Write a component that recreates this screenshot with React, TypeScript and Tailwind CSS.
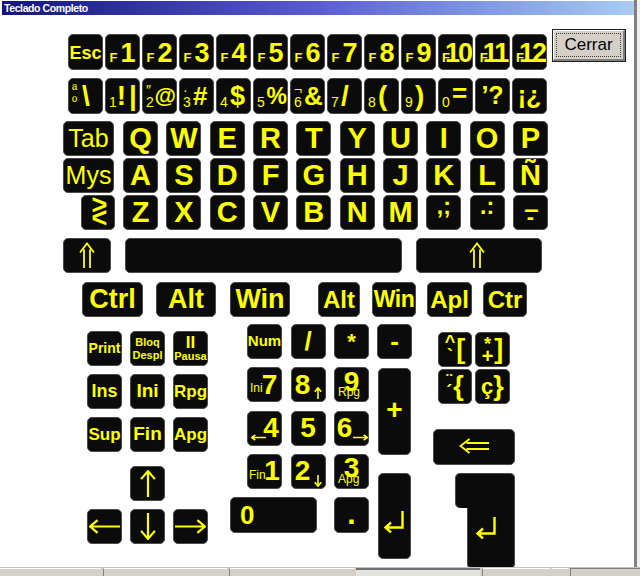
import React from "react";
import { twMerge } from "tailwind-merge";

const Y = "#ffff00";

function Key({ className, children }: { className?: string; children?: React.ReactNode }) {
  return (
    <div
      className={twMerge(
        "relative shrink-0 flex items-center justify-center overflow-hidden rounded-[5px] border border-[#4b4b4b] bg-[#0b0b0b] text-[#ffff00] font-bold leading-none whitespace-nowrap",
        className
      )}
    >
      {children}
    </div>
  );
}

// simple line arrow drawn in svg
function Arrow({ dir, w, h, sw = 2.2 }: { dir: "up" | "down" | "left" | "right"; w: number; h: number; sw?: number }) {
  let d = "";
  const s = sw / 2;
  if (dir === "up" || dir === "down") {
    const cx = w / 2;
    const hl = w / 2;
    if (dir === "up") d = `M${cx} ${s}V${h} M${s} ${hl + s}L${cx} ${s}L${w - s} ${hl + s}`;
    else d = `M${cx} 0V${h - s} M${s} ${h - hl - s}L${cx} ${h - s}L${w - s} ${h - hl - s}`;
  } else {
    const cy = h / 2;
    const hl = h / 2;
    if (dir === "left") d = `M${s} ${cy}H${w} M${hl + s} ${s}L${s} ${cy}L${hl + s} ${h - s}`;
    else d = `M0 ${cy}H${w - s} M${w - hl - s} ${s}L${w - s} ${cy}L${w - hl - s} ${h - s}`;
  }
  return (
    <svg width={w} height={h} viewBox={`0 0 ${w} ${h}`} fill="none" stroke={Y} strokeWidth={sw}>
      <path d={d} />
    </svg>
  );
}

function DoubleUp() {
  return (
    <svg width="16" height="26" viewBox="0 0 16 26" fill="none" stroke={Y} strokeWidth="1.8">
      <path d="M5 7.5V26M11 7.5V26M1 10.5L8 1.5L15 10.5" />
    </svg>
  );
}

function DoubleLeft() {
  return (
    <svg width="30" height="16" viewBox="0 0 30 16" fill="none" stroke={Y} strokeWidth="1.8">
      <path d="M7.5 5H30M7.5 11H30M10.5 1L1.5 8L10.5 15" />
    </svg>
  );
}

function EnterGlyph() {
  return (
    <svg width="22" height="22" viewBox="0 0 22 22" fill="none" stroke={Y} strokeWidth="2.4">
      <path d="M19.5 0V16.5H3M8 11.5L2.5 16.5L8 21.5" />
    </svg>
  );
}

function FKey({ n }: { n: number }) {
  const two = n >= 10;
  return (
    <Key className="w-[35px] h-[36px] items-end pb-[2px]">
      <div className="flex items-baseline">
        <span className={two ? "text-[13px] -mr-[5px]" : "text-[13px] mr-[3px]"}>F</span>
        <span className={two ? "text-[27px] tracking-[-2px] -mr-[2px]" : "text-[27px]"}>{n}</span>
      </div>
    </Key>
  );
}

const symRow = [
  { top: "ª", bottom: "º", big: "\\", cls: "text-[28px]" },
  { top: "", bottom: "1", big: "!|", cls: "text-[28px] tracking-[3px]" },
  { top: "″", bottom: "2", big: "@", cls: "text-[22px]" },
  { top: "·", bottom: "3", big: "#", cls: "text-[26px]" },
  { top: "", bottom: "4", big: "$", cls: "text-[27px]" },
  { top: "", bottom: "5", big: "%", cls: "text-[23px]" },
  { top: "¬", bottom: "6", big: "&", cls: "text-[26px]" },
  { top: "", bottom: "7", big: "/", cls: "text-[28px]" },
  { top: "", bottom: "8", big: "(", cls: "text-[28px]" },
  { top: "", bottom: "9", big: ")", cls: "text-[28px]" },
  { top: "", bottom: "0", big: "=", cls: "text-[26px] -mt-[6px]" },
];

function SymKey({ top, bottom, big, cls }: { top: string; bottom: string; big: string; cls: string }) {
  return (
    <Key className="w-[35px] h-[36px] justify-start pl-[3px]">
      <div className="flex w-[10px] flex-col justify-between self-stretch pt-[4px] pb-[4px] text-[14px] font-normal">
        <span className="h-[10px]">{top}</span>
        <span>{bottom}</span>
      </div>
      <span className={cls}>{big}</span>
    </Key>
  );
}

function Letter({ c }: { c: string }) {
  return <Key className="w-[35px] h-[35px] text-[29px]">{c}</Key>;
}

function CerrarButton() {
  return (
    <div className="ml-[5px] h-[33px] w-[74px] border border-[#202020] bg-[#d4d0c8]">
      <div className="h-full w-full border-l border-t border-white border-r-2 border-b-2 border-r-[#808080] border-b-[#808080] p-[2px]">
        <div className="flex h-full w-full items-center justify-center border border-dotted border-[#404040] text-[17px] text-black">
          Cerrar
        </div>
      </div>
    </div>
  );
}

export default function App() {
  return (
    <div className="flex h-[576px] w-[640px] flex-col overflow-hidden bg-white font-['Liberation_Sans',Arial,sans-serif]">
      <div className="flex h-[567px]">
        <div className="flex w-[634px] flex-col">
          {/* title bar */}
          <div className="ml-[2px] mt-px h-[14px] bg-gradient-to-r from-[#14147a] via-[#5c5cd2] via-50% to-[#a8ccf0] pl-[2px] text-[10.5px] font-bold leading-[14px] tracking-[-0.4px] text-white">
            Teclado Completo
          </div>

          {/* F row */}
          <div className="mt-[14px] flex items-start">
            <div className="ml-[68px] mt-[5px] flex gap-[2px]">
              <Key className="w-[35px] h-[36px] text-[18px] pt-[3px]">Esc</Key>
              {[1, 2, 3, 4, 5, 6, 7, 8, 9, 10, 11, 12].map((n) => (
                <FKey key={n} n={n} />
              ))}
            </div>
            <CerrarButton />
          </div>

          {/* number row */}
          <div className="ml-[68px] mt-[8px] flex gap-[2px]">
            {symRow.map((s, i) => (
              <SymKey key={i} {...s} />
            ))}
            <Key className="w-[35px] h-[36px] text-[25px]">’?</Key>
            <Key className="w-[35px] h-[36px] text-[25px]">¡¿</Key>
          </div>

          {/* qwerty */}
          <div className="ml-[63px] mt-[7px] flex">
            <Key className="w-[51px] h-[35px] text-[25px] font-normal">Tab</Key>
            <div className="ml-[9px] flex gap-[8.33px]">
              {"QWERTYUIOP".split("").map((c) => (
                <Letter key={c} c={c} />
              ))}
            </div>
          </div>

          <div className="ml-[63px] mt-[2px] flex">
            <Key className="w-[51px] h-[35px] text-[25px] font-normal">Mys</Key>
            <div className="ml-[9px] flex gap-[8.33px]">
              {"ASDFGHJKLÑ".split("").map((c) => (
                <Letter key={c} c={c} />
              ))}
            </div>
          </div>

          <div className="ml-[81px] mt-[2px] flex">
            <Key className="w-[34px] h-[35px] flex-col text-[27px] leading-[13px] pl-[3px] pb-[2px]">
              <span>&gt;</span>
              <span>&lt;</span>
            </Key>
            <div className="ml-[8px] flex gap-[8.33px]">
              {"ZXCVBNM".split("").map((c) => (
                <Letter key={c} c={c} />
              ))}
              <Key className="w-[35px] h-[35px] items-end pb-[6px] text-[23px]">,;</Key>
              <Key className="w-[35px] h-[35px] items-end pb-[6px] text-[23px]">.:</Key>
              <Key className="w-[35px] h-[35px] flex-col text-[26px] leading-[8px]">
                <span className="pl-[2px]">–</span>
                <span className="text-[22px]">-</span>
              </Key>
            </div>
          </div>

          {/* shift + space */}
          <div className="ml-[63px] mt-[8px] flex gap-[14px]">
            <Key className="w-[48px] h-[35px] pb-[2px]">
              <DoubleUp />
            </Key>
            <Key className="w-[277px] h-[35px]" />
            <Key className="w-[126px] h-[35px] pb-[2px] pr-[4px]">
              <DoubleUp />
            </Key>
          </div>

          {/* modifiers */}
          <div className="ml-[82px] mt-[9px] flex">
            <Key className="w-[61px] h-[35px] text-[27px]">Ctrl</Key>
            <Key className="ml-[13px] w-[60px] h-[35px] text-[27px]">Alt</Key>
            <Key className="ml-[14px] w-[60px] h-[35px] text-[27px]">Win</Key>
            <Key className="ml-[28px] w-[42px] h-[35px] text-[24px]">Alt</Key>
            <Key className="ml-[12px] w-[44px] h-[35px] text-[23px] tracking-[-0.5px]">Win</Key>
            <Key className="ml-[11px] w-[45px] h-[35px] text-[24px]">Apl</Key>
            <Key className="ml-[11px] w-[44px] h-[35px] text-[24px]">Ctr</Key>
          </div>

          {/* lower clusters */}
          <div className="mt-[7px] flex items-start">
            {/* edit / arrows */}
            <div className="ml-[87px] mt-[7px] flex flex-col">
              <div className="grid grid-cols-[35px_35px_35px] gap-[8px]">
                <Key className="w-[35px] h-[35px] text-[14px]">Print</Key>
                <Key className="w-[35px] h-[35px] flex-col text-[11px] leading-[13px]">
                  <span>Bloq</span>
                  <span>Despl</span>
                </Key>
                <Key className="w-[35px] h-[35px] flex-col">
                  <span className="text-[17px] leading-[15px]">II</span>
                  <span className="text-[11px] leading-[12px]">Pausa</span>
                </Key>
                <Key className="w-[35px] h-[35px] text-[18px]">Ins</Key>
                <Key className="w-[35px] h-[35px] text-[19px]">Ini</Key>
                <Key className="w-[35px] h-[35px] text-[17px]">Rpg</Key>
                <Key className="w-[35px] h-[35px] text-[17px]">Sup</Key>
                <Key className="w-[35px] h-[35px] text-[19px]">Fin</Key>
                <Key className="w-[35px] h-[35px] text-[17px]">Apg</Key>
              </div>
              <div className="ml-[43px] mt-[14px]">
                <Key className="w-[35px] h-[35px]">
                  <Arrow dir="up" w={16} h={27} />
                </Key>
              </div>
              <div className="mt-[8px] flex gap-[8px]">
                <Key className="w-[35px] h-[35px]">
                  <Arrow dir="left" w={31} h={15} />
                </Key>
                <Key className="w-[35px] h-[35px]">
                  <Arrow dir="down" w={16} h={27} />
                </Key>
                <Key className="w-[35px] h-[35px]">
                  <Arrow dir="right" w={31} h={15} />
                </Key>
              </div>
            </div>

            {/* numpad */}
            <div className="ml-[22px] flex">
              <div className="flex flex-col gap-[8.25px]">
                <div className="ml-[17px] flex gap-[8.5px]">
                  <Key className="w-[35px] h-[35px] text-[15px]">Num</Key>
                  <Key className="w-[35px] h-[35px] text-[26px]">/</Key>
                  <Key className="w-[35px] h-[35px] text-[22px]">*</Key>
                </div>
                <div className="ml-[17px] flex gap-[8.5px]">
                  <Key className="w-[35px] h-[35px] text-[28px] pl-[10px]">
                    7<span className="absolute bottom-[4px] left-[2px] text-[12px] font-normal">Ini</span>
                  </Key>
                  <Key className="w-[35px] h-[35px] text-[28px] pr-[11px]">
                    8
                    <span className="absolute bottom-[2px] right-[3px]">
                      <Arrow dir="up" w={8} h={12} sw={1.6} />
                    </span>
                  </Key>
                  <Key className="w-[35px] h-[35px] text-[28px] pb-[6px]">
                    9<span className="absolute bottom-0 left-[3px] text-[12px] font-normal">Rpg</span>
                  </Key>
                </div>
                <div className="ml-[17px] flex gap-[8.5px]">
                  <Key className="w-[35px] h-[35px] text-[28px] pl-[13px]">
                    4
                    <span className="absolute bottom-[4px] left-[3px]">
                      <Arrow dir="left" w={15} h={7} sw={1.6} />
                    </span>
                  </Key>
                  <Key className="w-[35px] h-[35px] text-[28px]">5</Key>
                  <Key className="w-[35px] h-[35px] text-[28px] pr-[14px]">
                    6
                    <span className="absolute bottom-[4px] right-0">
                      <Arrow dir="right" w={15} h={7} sw={1.6} />
                    </span>
                  </Key>
                </div>
                <div className="ml-[17px] flex gap-[8.5px]">
                  <Key className="w-[35px] h-[35px] text-[28px] pl-[15px]">
                    1<span className="absolute bottom-[4px] left-[1px] text-[12px] font-normal">Fin</span>
                  </Key>
                  <Key className="w-[35px] h-[35px] text-[28px] pr-[11px]">
                    2
                    <span className="absolute bottom-[1px] right-[3px]">
                      <Arrow dir="down" w={8} h={12} sw={1.6} />
                    </span>
                  </Key>
                  <Key className="w-[35px] h-[35px] text-[28px] pb-[6px]">
                    3<span className="absolute bottom-0 left-[3px] text-[12px] font-normal">Apg</span>
                  </Key>
                </div>
                <div className="flex">
                  <Key className="w-[87px] h-[36px] justify-start pl-[9px] text-[26px]">0</Key>
                  <Key className="ml-[17px] w-[35px] h-[36px] text-[30px] pb-[4px]">.</Key>
                </div>
              </div>
              <div className="ml-[8px] flex w-[35px] flex-col items-center">
                <Key className="w-[35px] h-[35px] text-[26px]">-</Key>
                <Key className="mt-[9px] w-[33px] h-[87px] text-[28px] pb-[3px]">+</Key>
                <Key className="mt-[18px] w-[33px] h-[86px] pt-[12px] pr-[2px]">
                  <EnterGlyph />
                </Key>
              </div>
            </div>

            {/* right cluster */}
            <div className="ml-[21px] mt-[8px] flex w-[82px] flex-col">
              <div className="ml-[5px] grid grid-cols-[34px_35px] gap-x-[3px] gap-y-[2px]">
                <Key className="w-[34px] h-[35px]">
                  <div className="mr-[1px] flex flex-col items-center text-[18px] leading-[11px]">
                    <span className="h-[14px]">^</span>
                    <span>`</span>
                  </div>
                  <span className="text-[27px]">[</span>
                </Key>
                <Key className="w-[35px] h-[35px]">
                  <div className="mr-[1px] flex flex-col items-center leading-[12px]">
                    <span className="text-[18px]">*</span>
                    <span className="text-[20px]">+</span>
                  </div>
                  <span className="text-[27px]">]</span>
                </Key>
                <Key className="w-[34px] h-[35px]">
                  <div className="mr-[1px] flex flex-col items-center text-[18px] leading-[11px]">
                    <span>¨</span>
                    <span>´</span>
                  </div>
                  <span className="text-[27px]">{"{"}</span>
                </Key>
                <Key className="w-[35px] h-[35px]">
                  <span className="text-[22px]">ç</span>
                  <span className="text-[27px]">{"}"}</span>
                </Key>
              </div>
              <Key className="mt-[25px] w-[82px] h-[36px] pb-[2px]">
                <DoubleLeft />
              </Key>
              <div className="ml-[19px] mt-[8px] flex flex-col items-end">
                <div className="h-[35px] w-[60px] rounded-t-[5px] rounded-bl-[5px] border border-b-0 border-[#4b4b4b] bg-[#0b0b0b]" />
                <div className="flex h-[61px] w-[48px] justify-center rounded-b-[5px] border border-t-0 border-[#4b4b4b] bg-[#0b0b0b] pr-[10px] pt-[9px]">
                  <EnterGlyph />
                </div>
              </div>
            </div>
          </div>
        </div>
        <div className="w-[3px] bg-[#808080]" />
        <div className="w-[3px] bg-[#f0f0f0]" />
      </div>
      {/* bottom edge / taskbar slice */}
      <div className="h-px bg-[#c4c4c4]" />
      <div className="flex h-[8px] bg-[#d4d0c8]">
        <div className="w-[101px] border-t border-white" />
        <div className="ml-[2px] w-[124px] border-l border-t border-white border-l-[#808080]" />
        <div className="ml-[2px] w-[125px] border-l border-t border-white border-l-[#808080]" />
        <div className="ml-[2px] w-[124px] border-t-2 border-[#707070] bg-[#e4e2dc]" />
        <div className="ml-[2px] w-[68px] border-l border-t border-white border-l-[#808080]" />
        <div className="ml-[2px] w-[16px] border-t border-white" />
        <div className="ml-[2px] flex-1 border-l border-t border-[#808080]" />
      </div>
    </div>
  );
}
